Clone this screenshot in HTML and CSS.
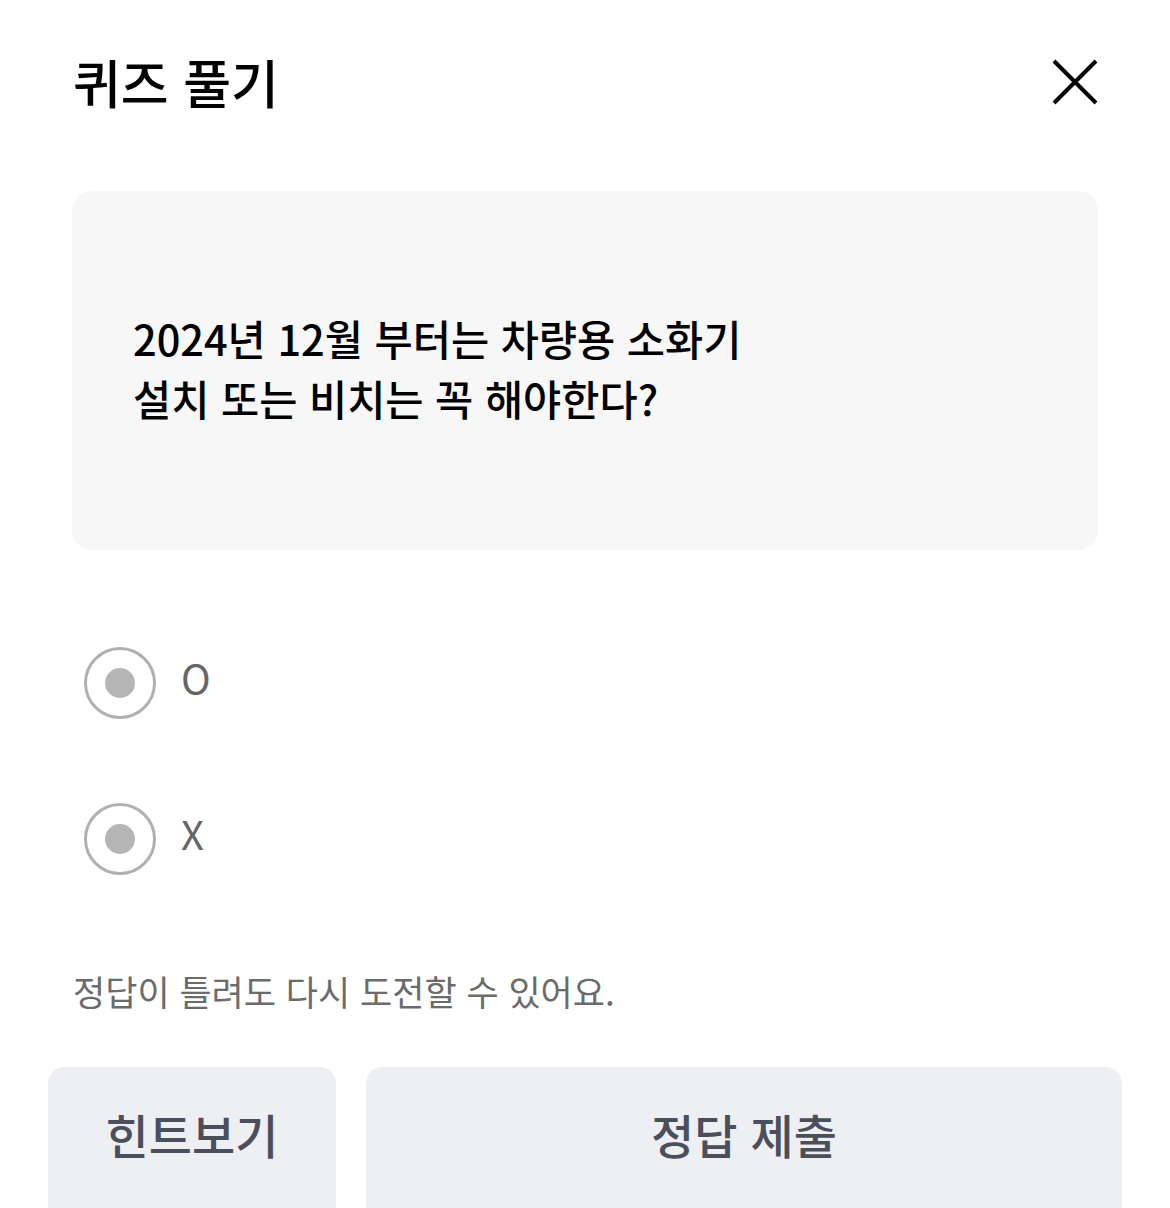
FILE: index.html
```html
<!DOCTYPE html>
<html lang="ko">
  <head>
    <meta charset="UTF-8" />
    <meta name="viewport" content="width=device-width, initial-scale=1.0" />
    <title>퀴즈 풀기</title>
    <link rel="stylesheet" href="styles.css">
  </head>
  <body>
    <div class="quiz-sheet">
      <header class="quiz-header">
        <h1 class="quiz-title">퀴즈 풀기</h1>
        <button class="close-button" aria-label="닫기">
          <svg width="48" height="48" viewBox="0 0 48 48">
            <path d="M3 3 L45 45 M45 3 L3 45" stroke="#000" stroke-width="4" fill="none" />
          </svg>
        </button>
      </header>

      <div class="question-box">
        <p class="question-text">
          2024년 12월 부터는 차량용 소화기<br />
          설치 또는 비치는 꼭 해야한다?
        </p>
      </div>

      <div class="answer-list">
        <label class="answer-option">
          <span class="radio"><span class="radio-dot"></span></span>
          <span class="answer-label">O</span>
        </label>
        <label class="answer-option">
          <span class="radio"><span class="radio-dot"></span></span>
          <span class="answer-label">X</span>
        </label>
      </div>

      <p class="retry-note">정답이 틀려도 다시 도전할 수 있어요.</p>

      <div class="action-row">
        <button class="action-button hint-button">힌트보기</button>
        <button class="action-button submit-button">정답 제출</button>
      </div>
    </div>
  </body>
</html>
```

FILE: styles.css
```css
* {
  margin: 0;
  padding: 0;
  box-sizing: border-box;
}

body {
  font-family: "Noto Sans CJK KR", "Noto Sans", sans-serif;
  background: #ffffff;
  color: #000000;
  overflow: hidden;
}

.quiz-sheet {
  padding: 40px 48px 0;
  min-height: 100vh;
}

.quiz-header {
  display: flex;
  align-items: center;
  justify-content: space-between;
  height: 84px;
  padding: 0 23px 0 25px;
}

.quiz-title {
  font-size: 52px;
  font-weight: 500;
  line-height: 1;
}

.close-button {
  background: none;
  border: none;
  width: 48px;
  height: 48px;
  display: flex;
  cursor: pointer;
}

.question-box {
  margin: 67px 24px 0;
  height: 359px;
  background: #f7f7f7;
  border-radius: 20px;
  display: flex;
  align-items: center;
  padding: 0 61px 6px;
}

.question-text {
  font-size: 41.5px;
  font-weight: 500;
  line-height: 60px;
  color: #000000;
}

.answer-list {
  margin: 97px 0 0 36px;
  display: flex;
  flex-direction: column;
  gap: 84px;
}

.answer-option {
  display: flex;
  align-items: center;
  gap: 25px;
  height: 72px;
  cursor: pointer;
}

.radio {
  width: 72px;
  height: 72px;
  border: 3px solid #b0b0b0;
  border-radius: 50%;
  display: flex;
  align-items: center;
  justify-content: center;
}

.radio-dot {
  width: 30px;
  height: 30px;
  border-radius: 50%;
  background: #b5b5b5;
}

.answer-label {
  font-size: 40px;
  font-weight: 400;
  color: #666666;
  line-height: 1;
  padding-bottom: 12px;
}

.retry-note {
  margin: 92px 0 0 25px;
  font-size: 35px;
  line-height: 48px;
  color: #6b6b6b;
}

.action-row {
  margin-top: 52px;
  display: flex;
  gap: 30px;
}

.action-button {
  height: 160px;
  padding-bottom: 28px;
  border: none;
  border-radius: 16px;
  background: #eeeff3;
  color: #4b4f5c;
  font-family: inherit;
  font-size: 47px;
  font-weight: 500;
  cursor: pointer;
}

.hint-button {
  width: 288px;
}

.submit-button {
  flex: 1;
}
```
